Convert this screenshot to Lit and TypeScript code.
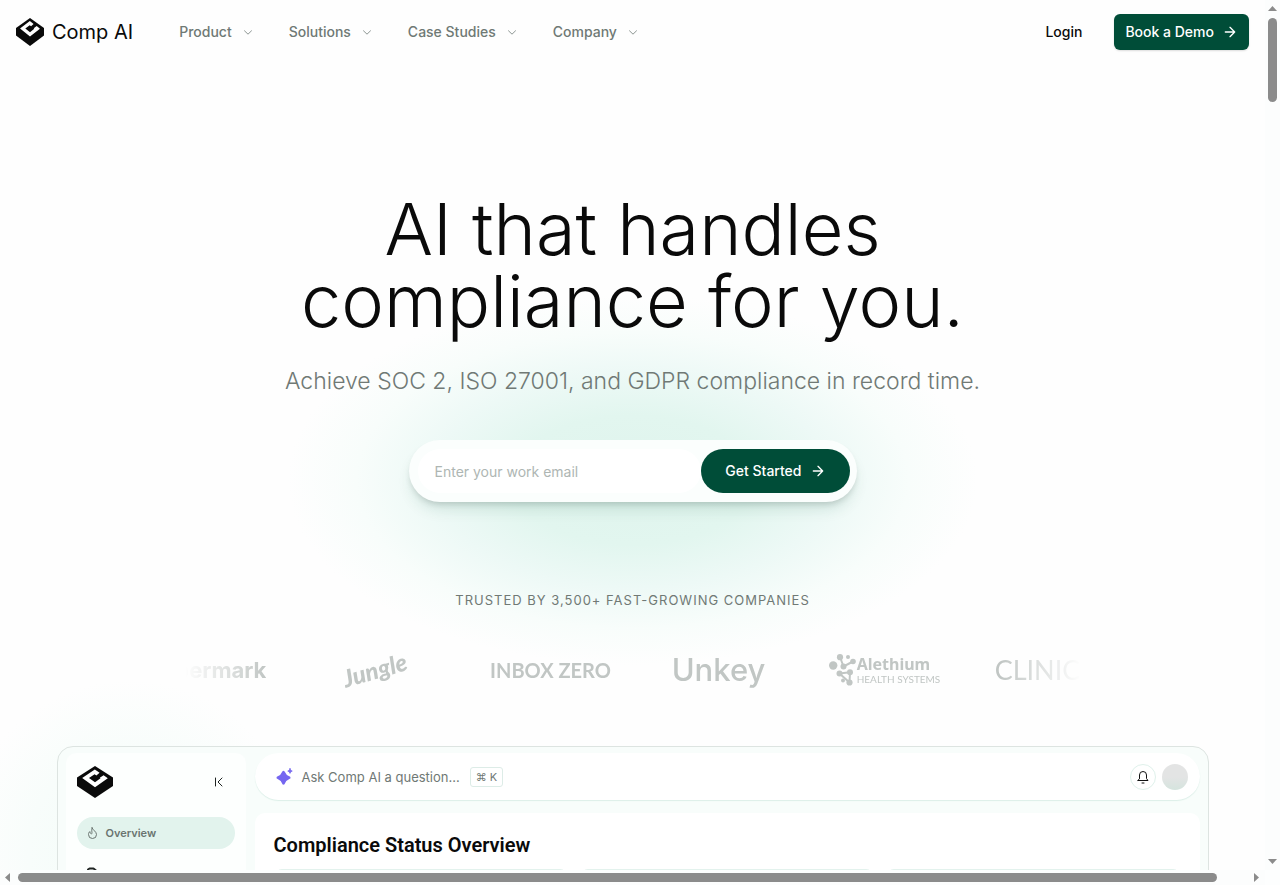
import { LitElement, html, css, svg } from "lit";
import { customElement } from "lit/decorators.js";

const cube = () => html`<svg class="cube" viewBox="0 0 36 32" preserveAspectRatio="none" aria-hidden="true">
  <path fill="#0a0a0a" d="M18 0 36 11.5V20L18 32 0 20V11.5Z" />
  <path fill="#fff" d="M17.800 3.500 5.200 12 18 21.200 30.800 12.200 26.600 9.200 22.800 11.800 23.500 12.300 18 16.300 12 12 17.600 8.300 19.400 9.400 22.600 6.800Z" />
</svg>`;

const arrow = () => html`<svg class="arrow" viewBox="0 0 24 24" aria-hidden="true">
  <path d="M5 12h14M12 5l7 7-7 7" />
</svg>`;

const chevron = () => html`<svg class="chevron" viewBox="0 0 12 12" aria-hidden="true">
  <path d="m2.500 4.800 3.500 3.400 3.500-3.400" />
</svg>`;

const molecule = () => {
  const dots: [number, number, number][] = [
    [11, 3.2, 3.1], [19, 3, 2], [4.2, 11.5, 4.2], [14.5, 12.5, 3], [24, 7.5, 2.8],
    [10.5, 19.5, 3], [21, 18.3, 3], [14, 26.5, 2], [20.5, 28.5, 3.1],
  ];
  return html`<svg class="molecule" viewBox="0 0 28 32" aria-hidden="true">
    <path d="M11 3l3.500 9.500 9.500-5M10.500 19.500l10.500-1.200-.500 10.200M10.500 19.500l10 9" />
    ${dots.map(([x, y, r]) => svg`<circle cx=${x} cy=${y} r=${r} />`)}
  </svg>`;
};

@customElement("app-root")
export class AppRoot extends LitElement {
  static styles = css`
    :host {
      display: grid;
      grid-template: minmax(0, 1fr) 15px / minmax(0, 1fr) 15px;
      height: 100vh;
      background: #fdfefe;
      color: #0a0a0a;
      font-family: Inter, "Liberation Sans", sans-serif;
    }
    * { box-sizing: border-box; }
    button, input { font: inherit; }
    button { border: 0; background: none; padding: 0; color: inherit; cursor: pointer; }
    a { color: inherit; text-decoration: none; }
    h1, h2, p, ul { margin: 0; padding: 0; }
    svg { display: block; flex: none; fill: none; stroke-linecap: round; stroke-linejoin: round; }

    .page {
      overflow: hidden;
      background:
        radial-gradient(circle 170px at 130px 850px, #f2fcf8 0%, #f8fdfb 60%, #fefefe00 100%),
        radial-gradient(ellipse 345px 185px at 50% 480px, #dff4ed 0%, #e2f6ef 35%, #edf9f6 58%, #f8fdfb 80%, #fefefe00 100%),
        #fefefe;
    }
    header { display: flex; align-items: center; height: 64px; padding: 0 16px; }
    .brand { display: flex; align-items: center; gap: 8px; font-size: 20px; font-weight: 400; line-height: 28px; }
    .brand .cube { width: 28px; height: 28px; }
    nav { display: flex; gap: 35px; margin-left: 46px; flex: 1; }
    nav button { display: flex; align-items: center; gap: 10px; color: #6f7975; font-size: 14px; font-weight: 500; line-height: 20px; }
    .chevron { width: 12px; height: 12px; stroke: #8d9693; }
    .login { font-size: 14px; font-weight: 500; line-height: 20px; margin-right: 32px; }
    .cta { display: flex; align-items: center; gap: 8px; color: #fff; background: #004d38; font-size: 14px; font-weight: 500; line-height: 20px; }
    .arrow { width: 16px; height: 16px; stroke: currentColor; stroke-width: 2; }
    .demo { height: 36px; padding: 0 11px; border-radius: 6px; box-shadow: 0 1px 2px #0002; }

    .hero { display: flex; flex-direction: column; align-items: center; padding-top: 129px; text-align: center; }
    h1 { font-size: 72px; line-height: 72px; font-weight: 300; }
    .lead { margin-top: 28px; font-size: 23px; line-height: 32px; font-weight: 300; color: #707975; }
    form {
      display: flex; align-items: center; width: 100%; max-width: 448px; height: 62px; margin-top: 43px; padding: 0 7px 0 9px;
      border-radius: 31px; background: #fbfefd;
      box-shadow: 0 10px 15px -3px #0050381f, 0 4px 6px -2px #00000026;
    }
    input { flex: 1; min-width: 0; height: 44px; padding: 0 17px; border: 0; outline: 0; background: #fff; border-radius: 22px; font-size: 14px; color: #0a0a0a; }
    input::placeholder { color: #aeb6b3; opacity: 1; }
    .start { height: 44px; padding: 0 24px; border-radius: 22px; }
    .trusted { margin-top: 88px; font-size: 13px; line-height: 20px; letter-spacing: 1px; color: #707975; }
    .logos {
      display: flex; align-items: center; justify-content: center; width: 100%; max-width: 896px; height: 48px; margin-top: 36px; overflow: hidden;
      list-style: none; color: #c1c6c4;
      -webkit-mask-image: linear-gradient(90deg, transparent, #000 9%, #000 91%, transparent);
      mask-image: linear-gradient(90deg, transparent, #000 9%, #000 91%, transparent);
    }
    .logos li { display: flex; flex: none; justify-content: center; align-items: center; width: 168px; white-space: nowrap; }
    .logos .papermark { padding-right: 10px; font-size: 22px; font-weight: 700; line-height: 28px; }
    .logos .jungle { padding-right: 12px; }
    .script { font: italic 900 24px/32px Lato, sans-serif; rotate: -16deg; }
    .logos .inbox { padding-left: 4px; font: 700 20px/28px Lato, sans-serif; }
    .logos .unkey { padding-left: 4px; font-size: 31px; font-weight: 500; line-height: 32px; }
    .molecule { width: 28px; height: 32px; fill: currentColor; }
    .molecule path { stroke: currentColor; stroke-width: 2; fill: none; }
    .stack { display: flex; flex-direction: column; text-align: left; }
    .name { font: 700 16px/18px "Noto Sans", sans-serif; }
    .sub { font: 400 10px/12px Lato, sans-serif; }
    .logos .clinic { padding-right: 30px; font: 400 27px/32px Lato, sans-serif; }

    .app {
      display: grid; grid-template-columns: 180px minmax(0, 1fr); gap: 9px; width: calc(100% - 32px); max-width: 1152px; margin: 52px auto 0; padding: 6px 8px;
      border: 1px solid #dde4e1; border-radius: 16px; background: #f8fdfb; text-align: left;
    }
    .side { padding: 13px 11px 12px 11px; background: #ffffffb0; border-radius: 10px; }
    .sidetop { display: flex; align-items: center; justify-content: space-between; }
    .side .cube { width: 36px; height: 32px; }
    .collapse { padding-right: 10px; }
    .collapse svg { width: 12px; height: 12px; stroke: #202523; }
    .item { display: flex; align-items: center; gap: 8px; height: 32px; padding: 0 10px; border-radius: 16px; font-size: 11px; line-height: 16px; font-weight: 600; color: #6a7470; }
    .item svg { width: 11px; height: 12px; stroke: currentColor; }
    .active { margin-top: 19px; background: #e2f3ed; }
    .next { margin-top: 8px; color: #202523; }
    .next svg { height: 16px; stroke-width: 2; }
    .main { display: flex; flex-direction: column; gap: 13px; }
    .bar { display: flex; align-items: center; height: 47px; padding: 0 12px 0 21px; border-radius: 24px; background: #fff; box-shadow: 0 1px 1px #dcefe8; }
    .spark { width: 17px; height: 18px; fill: #7566f0; }
    .ask { margin-left: 9px; font-size: 13px; line-height: 20px; font-weight: 400; color: #6f7975; }
    kbd { display: flex; align-items: center; height: 20px; margin-left: 10px; padding: 0 5px; border: 1px solid #ddece7; border-radius: 3px; font: 400 11px/16px Inter, "DejaVu Sans", sans-serif; color: #6f7975; }
    .bell { display: grid; place-items: center; width: 26px; height: 26px; margin-left: auto; border: 1px solid #dff1eb; border-radius: 13px; }
    .bell svg { width: 12px; height: 14px; stroke: #111; }
    .avatar { width: 26px; height: 26px; margin-left: 6px; border-radius: 13px; background: linear-gradient(#e3e4e4 50%, #d5e4de); }
    .panel { padding: 19px 19px; background: #fff; border-radius: 10px; }
    h2 { font: 600 20px/26px Roboto, sans-serif; }
    .cards { display: grid; grid-template-columns: repeat(3, 1fr); gap: 12px; margin-top: 11px; }
    .card { height: 120px; border: 1px solid #e3f2ed; border-radius: 8px; }

    .vbar { display: flex; flex-direction: column; align-items: center; justify-content: space-between; padding: 6px 3px; background: #fcfdfd; }
    .hbar { display: flex; align-items: center; gap: 8px; padding: 0 6px 0 5px; background: #fcfdfd; }
    .thumb { background: #8b8b8b; border-radius: 5px; }
    .vbar .thumb { width: 9px; height: 84px; margin: 7px 0 auto; }
    .hbar .thumb { width: 1199px; max-width: 96%; height: 9px; margin-right: auto; }
    .tri { width: 9px; height: 5px; fill: #8b8b8b; }
    .side-tri { width: 5px; height: 9px; fill: #8b8b8b; }
  `;

  render() {
    return html`
      <div class="page">
        <header>
          <a class="brand" href="#">${cube()}<span>Comp AI</span></a>
          <nav>
            ${["Product", "Solutions", "Case Studies", "Company"].map(
              (t) => html`<button type="button">${t}${chevron()}</button>`
            )}
          </nav>
          <a class="login" href="#">Login</a>
          <a class="cta demo" href="#">Book a Demo ${arrow()}</a>
        </header>
        <main>
          <section class="hero">
            <h1>AI that handles<br />compliance for you.</h1>
            <p class="lead">Achieve SOC 2, ISO 27001, and GDPR compliance in record time.</p>
            <form>
              <input type="email" aria-label="Work email" placeholder="Enter your work email" />
              <button type="button" class="cta start">Get Started ${arrow()}</button>
            </form>
            <p class="trusted">TRUSTED BY 3,500+ FAST-GROWING COMPANIES</p>
            <ul class="logos">
              <li class="papermark">Papermark</li>
              <li class="jungle"><span class="script">Jungle</span></li>
              <li class="inbox">INBOX ZERO</li>
              <li class="unkey">Unkey</li>
              <li class="alethium">
                ${molecule()}
                <span class="stack"><span class="name">Alethium</span><span class="sub">HEALTH SYSTEMS</span></span>
              </li>
              <li class="clinic">CLINIC</li>
            </ul>
          </section>
          <section class="app">
            <div class="side">
              <div class="sidetop">
                ${cube()}
                <button class="collapse" type="button" aria-label="Collapse sidebar">
                  <svg viewBox="0 0 12 12"><path d="M2.500 2v8M9 2 5 6l4 4" /></svg>
                </button>
              </div>
              <a class="item active" href="#">
                <svg viewBox="0 0 11 12"><path d="M5 .8C5.500 3 9.500 4.500 9.500 7.500a4 4 0 0 1-8 0C1.500 6 2.200 5 3 4.500c0 1.500.6 2.300 1.500 2.300C5.800 6.800 4 3.500 5 .8Z" /></svg>
                Overview
              </a>
              <a class="item next" href="#" aria-label="Controls">
                <svg viewBox="0 0 11 16"><path d="M1 4.500 2.500 3.500h4L9 5.500v9H1Z" /></svg>
              </a>
            </div>
            <div class="main">
              <div class="bar">
                <svg class="spark" viewBox="0 0 17 18">
                  <path d="M7.500 4c1.200 3.200 2.200 4.300 5.800 5.700-3.600 1.500-4.600 2.600-5.800 5.800-1.200-3.200-2.200-4.300-5.800-5.800C5.300 8.300 6.300 7.200 7.500 4Z" stroke="#7566f0" stroke-width="2.400" />
                  <path d="M14 .8c.5 1.400.9 1.800 2.200 2.300-1.300.5-1.700.9-2.200 2.200-.5-1.300-.9-1.700-2.200-2.200 1.300-.5 1.700-.9 2.200-2.300Z" stroke="#7566f0" />
                </svg>
                <span class="ask">Ask Comp AI a question...</span>
                <kbd>⌘ K</kbd>
                <button class="bell" type="button" aria-label="Notifications">
                  <svg viewBox="0 0 12 14"><path d="M1 10.500h10L9.500 8.500V5a3.500 3.500 0 0 0-7 0v3.500ZM5 13h2" /></svg>
                </button>
                <span class="avatar"></span>
              </div>
              <div class="panel">
                <h2>Compliance Status Overview</h2>
                <div class="cards"><div class="card"></div><div class="card"></div><div class="card"></div></div>
              </div>
            </div>
          </section>
        </main>
      </div>
      <div class="vbar" aria-hidden="true">
        <svg class="tri" viewBox="0 0 9 5"><path d="M4.500 0 9 5H0Z" /></svg>
        <div class="thumb"></div>
        <svg class="tri" viewBox="0 0 9 5"><path d="M0 0h9L4.500 5Z" /></svg>
      </div>
      <div class="hbar" aria-hidden="true">
        <svg class="side-tri" viewBox="0 0 5 9"><path d="M5 0v9L0 4.500Z" /></svg>
        <div class="thumb"></div>
        <svg class="side-tri" viewBox="0 0 5 9"><path d="M0 0l5 4.500L0 9Z" /></svg>
      </div>
    `;
  }
}
